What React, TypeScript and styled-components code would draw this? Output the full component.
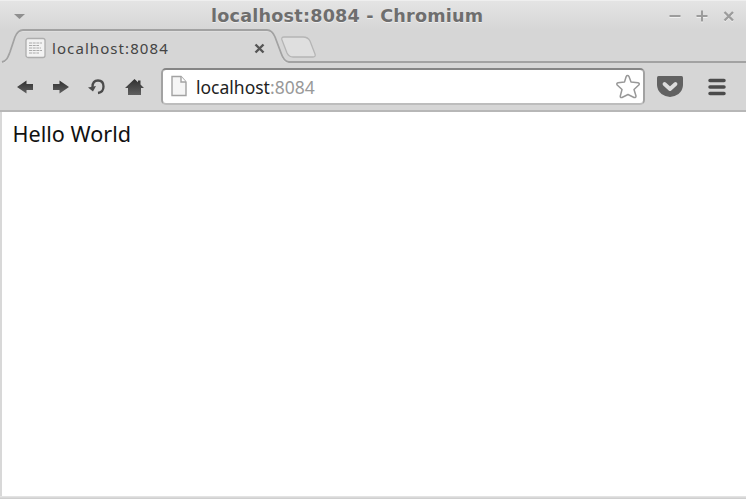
import React from "react";
import styled, { createGlobalStyle } from "styled-components";

const GlobalStyle = createGlobalStyle`
  * { box-sizing: border-box; }
  html, body { margin: 0; background: #d6d6d6; overflow: hidden; }
  svg { display: block; }
`;

const Window = styled.div`
  display: flex;
  flex-direction: column;
  width: 746px;
  height: 499px;
  background: #d6d6d6;
`;

const TitleBar = styled.header`
  display: grid;
  grid-template-columns: 211px 1fr 79px;
  align-items: center;
  height: 29px;
  padding-top: 1px;
  border-top: 1px solid #efefef;
  background: linear-gradient(#e4e4e4, #d6d6d6);
`;

const MenuArrow = styled.div`
  padding: 1px 0 0 13px;
`;

const Title = styled.div`
  font: bold 17.6px/28px "DejaVu Sans", sans-serif;
  letter-spacing: 0.22px;
  color: #6e6e6e;
  text-shadow: 0 1px #eeeeee;
  white-space: nowrap;
`;

const TabStrip = styled.div`
  display: grid;
  height: 34px;
`;

const TabOutline = styled.svg`
  grid-area: 1 / 1;
`;

const Tab = styled.div`
  grid-area: 1 / 1;
  display: flex;
  align-items: center;
  height: 34px;
  padding-left: 25px;
  padding-top: 4px;
`;

const TabLabel = styled.span`
  width: 202px;
  margin-left: 6px;
  font: 15px/24px "Noto Sans", sans-serif;
  letter-spacing: 1.08px;
  color: #444;
`;

const Toolbar = styled.nav`
  display: flex;
  align-items: center;
  height: 49px;
  padding: 0 0 1px 16px;
  border-bottom: 2px solid #b7b7b7;
`;

const ToolIcon = styled.div<{ $w: number; $gap: number }>`
  width: ${(p) => p.$w}px;
  margin-right: ${(p) => p.$gap}px;
  padding-top: 1px;
`;

const AddressBar = styled.div`
  display: flex;
  align-items: center;
  width: 484px;
  height: 37px;
  margin-right: 12px;
  padding: 0 3px 0 8px;
  border: 2px solid #a2a2a2;
  border-top-color: #858585;
  border-bottom-color: #bdbdbd;
  border-radius: 5px;
  background: #fff;
`;

const Address = styled.div`
  flex: 1;
  margin-left: 9px;
  padding-top: 1px;
  font: 17.5px/26px "Noto Sans", sans-serif;
  color: #222;
`;

const Port = styled.span`
  color: #999;
`;

const Page = styled.main`
  flex: 1;
  padding: 8px 10.5px;
  border-left: 2px solid #d8d8d8;
  background: #fff;
  font: 21.6px/28px "Noto Sans", sans-serif;
  color: #111;
`;

const BottomEdge = styled.div`
  height: 3px;
  background: linear-gradient(#e8e8e8, #cacaca);
`;

export default function App() {
  return (
    <>
      <GlobalStyle />
      <Window>
        <TitleBar>
          <MenuArrow>
            <svg width="13" height="7"><path d="M1 1H12L6.5 6Z" fill="#8f8f8f" /></svg>
          </MenuArrow>
          <Title>localhost:8084 - Chromium</Title>
          <svg width="79" height="28" fill="none">
            <g stroke="#f0f0f0" strokeWidth="2" transform="translate(0 1)">
              <path d="M2.500 14H13.500M29.500 14H40.500M35 8.500V19.500M57.500 10L66 18.500M66 10L57.500 18.500" />
            </g>
            <g stroke="#9c9c9c" strokeWidth="2">
              <path d="M2.500 14H13.500M29.500 14H40.500M35 8.500V19.500" />
              <path d="M57.500 10L66 18.500M66 10L57.500 18.500" strokeWidth="2.400" />
            </g>
          </svg>
        </TitleBar>
        <TabStrip>
          <TabOutline width="746" height="34" fill="none">
            <path d="M2 34C7 33 8 29 10 24L15 9Q18 2 23 2H267Q272 2 275 9L281 25Q284 34 289 34H746" stroke="#e6e6e6" strokeWidth="1.200" />
            <path d="M2 33C7 32 8 28 10 23L15 8Q18 1 23 1H267Q272 1 275 8L281 24Q284 33 289 33H746" stroke="#a2a2a2" strokeWidth="1.800" />
            <path d="M284 8H303Q308 8 310 12L315 25Q316 28 313 28H293Q289 28 287 24L282 11Q281 8 284 8Z" fill="#dfdfdf" stroke="#b5b5b5" strokeWidth="1.300" />
          </TabOutline>
          <Tab>
            <svg width="21" height="22" fill="none">
              <rect x="1" y="1.500" width="19" height="19" rx="2" fill="#f3f3f3" stroke="#adadad" strokeWidth="1.300" />
              <path d="M4 6H17M4 8.500H14M4 11H16M4 13.500H17M4 16H14" stroke="#aaa" strokeDasharray="3 0.7" />
            </svg>
            <TabLabel>localhost:8084</TabLabel>
            <svg width="12" height="11"><path d="M1.500 1.500L9.500 9.500M9.500 1.500L1.500 9.500" stroke="#555" strokeWidth="2.400" /></svg>
          </Tab>
        </TabStrip>
        <Toolbar>
          <svg width="0" height="0">
            <defs>
              <linearGradient id="dark" x1="0" y1="0" x2="0" y2="1">
                <stop stopColor="#303030" /><stop offset="1" stopColor="#606060" />
              </linearGradient>
            </defs>
          </svg>
          <ToolIcon $w={18} $gap={18}>
            <svg width="18" height="16"><path d="M1 8L10.500 1.500V5H17V11H10.500V14.500Z" fill="url(#dark)" /></svg>
          </ToolIcon>
          <ToolIcon $w={18} $gap={18}>
            <svg width="18" height="16"><path d="M17 8L7.500 1.500V5H1V11H7.500V14.500Z" fill="url(#dark)" /></svg>
          </ToolIcon>
          <ToolIcon $w={20} $gap={17}>
            <svg width="20" height="18" fill="none">
              <path d="M4.500 9C4.500 5 6.500 2.500 10 2.500C13.500 2.500 15.500 5 15.500 8.500C15.500 12 13.500 14.500 10 15" stroke="#4b4b4b" strokeWidth="2.300" />
              <path d="M0 9.500L8 8L5 13.500Z" fill="#4b4b4b" />
            </svg>
          </ToolIcon>
          <ToolIcon $w={20} $gap={16}>
            <svg width="19" height="18"><path d="M9.500 1L13 4.200V2.500H15.500V6.500L19 10H16V17H3V10H0Z" fill="url(#dark)" /></svg>
          </ToolIcon>
          <AddressBar>
            <svg width="16" height="22"><path d="M1 1.500H10L15 7V20.500H1Z" fill="#f5f5f5" stroke="#a2a2a2" strokeWidth="1.400" /><path d="M10 1.500V7H15" fill="#fff" stroke="#a2a2a2" strokeWidth="1.400" /></svg>
            <Address>localhost<Port>:8084</Port></Address>
            <svg width="24" height="25"><path d="M11.500 1.500Q12.500 1.500 13 2.500L15 8L22 8.800Q24 9.300 22.800 11L18 15.500L20 22Q20 24 18 23.500L12 20.500L6 23.500Q4 24 4.300 22L6 15.500L1.200 11Q0.200 9.300 2 8.800L8.500 8L10.200 2.500Q10.700 1.500 11.500 1.500Z" fill="#fff" stroke="#989898" strokeWidth="1.500" strokeLinejoin="round" /></svg>
          </AddressBar>
          <ToolIcon $w={26} $gap={25}>
            <svg width="26" height="25" fill="none">
              <path d="M1.500 2H24.500Q26 2 26 3.500V11Q26 16 21.500 20Q17 23 13 23Q9 23 4.500 20Q0 16 0 11V3.500Q0 2 1.500 2Z" fill="#626262" />
              <path d="M7.500 10L13 15L18.500 10" stroke="#ddd" strokeWidth="3.800" strokeLinecap="round" strokeLinejoin="round" />
            </svg>
          </ToolIcon>
          <ToolIcon $w={18} $gap={0}>
            <svg width="18" height="18"><path d="M2 2.500H16M2 9H16M2 15.500H16" stroke="#4b4b4b" strokeWidth="3.500" strokeLinecap="round" /></svg>
          </ToolIcon>
        </Toolbar>
        <Page>Hello World</Page>
        <BottomEdge />
      </Window>
    </>
  );
}
